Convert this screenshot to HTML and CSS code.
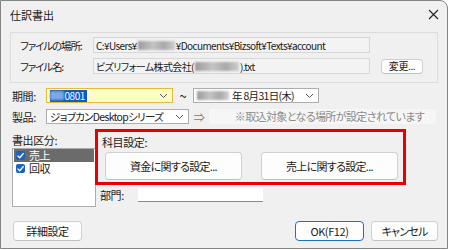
FILE: index.html
```html
<!DOCTYPE html>
<html lang="ja">
<head>
    <meta charset="UTF-8">
    <title>仕訳書出</title>
    <link rel="stylesheet" href="styles.css">
</head>
<body>
    <div class="window">
        <div class="titlebar">
            <span class="title">仕訳書出</span>
            <svg class="close" width="11" height="11" viewBox="0 0 11 11">
                <path d="M1 1 L10 10 M10 1 L1 10" stroke="#222" stroke-width="1.1" fill="none"/>
            </svg>
        </div>

        <div class="content">
            <div class="group">
                <div class="group-row">
                    <span class="label">ファイルの場所:</span>
                    <div class="field">C:¥Users¥<span class="blur path-blur"></span>¥Documents¥Bizsoft¥Texts¥account</div>
                </div>
                <div class="group-row">
                    <span class="label">ファイル名:</span>
                    <div class="field">ビズリフォーム株式会社(<span class="blur name-blur"></span>).txt</div>
                    <button class="btn btn-change">変更...</button>
                </div>
            </div>

            <div class="line line-period">
                <span class="short-label">期間:</span>
                <div class="combo combo-from">
                    <span class="selected"><span class="blur sel-blur"></span>0801</span>
                    <svg class="chevron" width="9" height="6" viewBox="0 0 9 6"><path d="M1 1 L4.5 4.5 L8 1" stroke="#555" fill="none"/></svg>
                </div>
                <span class="tilde">~</span>
                <div class="combo combo-to">
                    <span class="combo-text"><span class="blur date-blur"></span>年 8月31日(木)</span>
                    <svg class="chevron" width="9" height="6" viewBox="0 0 9 6"><path d="M1 1 L4.5 4.5 L8 1" stroke="#555" fill="none"/></svg>
                </div>
            </div>

            <div class="line line-product">
                <span class="short-label">製品:</span>
                <div class="combo combo-product">
                    <span class="combo-text">ジョブカンDesktopシリーズ</span>
                    <svg class="chevron" width="9" height="6" viewBox="0 0 9 6"><path d="M1 1 L4.5 4.5 L8 1" stroke="#555" fill="none"/></svg>
                </div>
                <span class="arrow">⇒</span>
                <div class="note-field">※取込対象となる場所が設定されています</div>
            </div>

            <div class="lower">
                <div class="output-col">
                    <div class="output-label">書出区分:</div>
                    <div class="listbox">
                        <div class="list-item active"><span class="check"><svg width="9" height="9" viewBox="0 0 9 9"><path d="M1.5 4.6 L3.7 6.7 L7.6 2.3" stroke="#fff" stroke-width="1.3" fill="none"/></svg></span>売上</div>
                        <div class="list-item"><span class="check"><svg width="9" height="9" viewBox="0 0 9 9"><path d="M1.5 4.6 L3.7 6.7 L7.6 2.3" stroke="#fff" stroke-width="1.3" fill="none"/></svg></span>回収</div>
                    </div>
                </div>

                <div class="settings-col">
                    <div class="subject-box">
                        <div class="subject-label">科目設定:</div>
                        <div class="subject-buttons">
                            <button class="btn btn-subject">資金に関する設定...</button>
                            <button class="btn btn-subject">売上に関する設定...</button>
                        </div>
                    </div>
                    <div class="dept-row">
                        <span class="dept-label">部門:</span>
                        <div class="dept-field"></div>
                    </div>
                </div>
            </div>

            <div class="footer">
                <button class="btn btn-detail">詳細設定</button>
                <div class="footer-right">
                    <button class="btn btn-ok">OK(F12)</button>
                    <button class="btn btn-cancel">キャンセル</button>
                </div>
            </div>
        </div>
    </div>
</body>
</html>
```

FILE: styles.css
```css
/* General */
* {
    box-sizing: border-box;
}

body {
    margin: 0;
    background-color: #fff;
    font-family: "Noto Sans CJK JP", "Noto Sans", sans-serif;
    font-feature-settings: "palt";
    font-size: 11px;
    letter-spacing: -0.4px;
    color: #1a1a1a;
}

.window {
    width: 448px;
    height: 249px;
    background-color: #f0f0f0;
    border: 1px solid #858585;
    border-top-right-radius: 8px;
    overflow: hidden;
}

/* Title bar */
.titlebar {
    height: 30px;
    display: flex;
    align-items: center;
    justify-content: space-between;
    padding: 0 8px 0 9px;
}

.title {
    margin-top: -3px;
    letter-spacing: 0;
}

.close {
    margin-top: -3px;
}

.content {
    padding: 0 9px 0 9px;
}

/* File group */
.group {
    height: 51px;
    border: 1px solid #dcdcdc;
    margin-top: 1px;
    padding: 4px 5px 0 9px;
    display: flex;
    flex-direction: column;
    gap: 5px;
}

.group-row {
    display: flex;
    align-items: center;
    height: 16px;
}

.label {
    width: 73px;
    flex-shrink: 0;
    white-space: nowrap;
    font-size: 10.5px;
    letter-spacing: -1.1px;
}

.field {
    width: 277px;
    height: 16px;
    border: 1px solid #d6d6d6;
    background-color: #f3f3f3;
    padding-left: 2px;
    white-space: nowrap;
    overflow: hidden;
    display: flex;
    align-items: center;
    font-size: 10px;
    letter-spacing: -0.6px;
}

.blur {
    display: inline-block;
    height: 9px;
    background: linear-gradient(90deg, #9a9a9a, #c4c4c4 40%, #a8a8a8 70%, #cfcfcf);
    filter: blur(0.8px);
}

.path-blur { width: 37px; margin: 0 1px; }
.name-blur { width: 44px; margin: 0 1px; }
.date-blur { width: 32px; margin-right: 3px; }
.sel-blur { width: 16px; background: #7fa9dd; }

/* Buttons */
.btn {
    font-family: inherit;
    font-feature-settings: "palt";
    font-size: 11px;
    letter-spacing: -0.4px;
    color: #1a1a1a;
    background-color: #fdfdfd;
    border: 1px solid #d0d0d0;
    border-bottom-color: #c0c0c0;
    border-radius: 4px;
    padding: 0;
    cursor: pointer;
}

.btn-change {
    width: 42px;
    height: 15px;
    margin-left: 11px;
    font-size: 10px;
    line-height: 12px;
}

/* Period and product rows */
.line {
    display: flex;
    align-items: center;
    padding-left: 2px;
    height: 15px;
}

.line-period {
    margin-top: 5px;
}

.line-product {
    margin-top: 6px;
}

.short-label {
    width: 34px;
    flex-shrink: 0;
}

.combo {
    height: 15px;
    border: 1px solid #adadad;
    background-color: #fff;
    display: flex;
    align-items: center;
    justify-content: space-between;
    padding: 0 4px 0 3px;
}

.combo-from {
    width: 127px;
    background-color: #ffffc4;
    border-color: #e4b93c;
}

.combo-to {
    width: 126px;
}

.combo-product {
    width: 143px;
}

.selected {
    background-color: #0a5cc2;
    color: #fff;
    height: 12px;
    padding-right: 2px;
    display: flex;
    align-items: center;
    width: 37px;
    justify-content: space-between;
    font-size: 10px;
}

.combo-text {
    display: flex;
    align-items: center;
    white-space: nowrap;
    font-size: 10.5px;
    letter-spacing: -0.7px;
}

.tilde {
    width: 20px;
    text-align: center;
    font-size: 13px;
}

.arrow {
    width: 20px;
    text-align: center;
    color: #777;
}

.note-field {
    width: 227px;
    height: 15px;
    line-height: 15px;
    background-color: #f6f6f6;
    border-radius: 2px;
    color: #8a8a8a;
    text-align: center;
    padding-left: 14px;
    white-space: nowrap;
    letter-spacing: -0.6px;
}

/* Lower area */
.lower {
    display: flex;
    margin-top: 5px;
    height: 80px;
}

.output-col {
    width: 86px;
    padding-left: 2px;
    flex-shrink: 0;
}

.output-label {
    margin-top: 4px;
    height: 15px;
    line-height: 15px;
}

.listbox {
    height: 59px;
    border: 1px solid #adadad;
    background-color: #fff;
    padding: 0 1px;
}

.list-item {
    height: 13px;
    line-height: 13px;
    display: flex;
    align-items: center;
}

.list-item.active {
    background-color: #6b6b6b;
    color: #fff;
}

.check {
    width: 9px;
    height: 9px;
    background-color: #1c63c0;
    border-radius: 2px;
    margin: 0 4px 0 2px;
    display: flex;
    align-items: center;
    justify-content: center;
}

.settings-col {
    margin-left: -1px;
}

.subject-box {
    width: 311px;
    height: 56px;
    border: 3px solid #e80000;
    padding: 0 0 0 4px;
}

.subject-label {
    height: 20px;
    line-height: 20px;
}

.subject-buttons {
    display: flex;
    gap: 19px;
    padding-left: 3px;
}

.btn-subject {
    width: 137px;
    height: 28px;
    letter-spacing: -0.7px;
}

.dept-row {
    display: flex;
    align-items: center;
    margin-top: 2px;
    padding-left: 5px;
}

.dept-label {
    width: 38px;
}

.dept-field {
    width: 125px;
    height: 14px;
    background-color: #fff;
    border-bottom: 1px solid #8a8a8a;
}

/* Footer */
.footer {
    display: flex;
    justify-content: space-between;
    align-items: center;
    margin-top: 12px;
    padding-left: 3px;
}

.footer-right {
    display: flex;
    gap: 7px;
}

.btn-detail {
    width: 69px;
    height: 20px;
}

.btn-ok {
    width: 69px;
    height: 20px;
    border: 1px solid #1f6fc4;
}

.btn-cancel {
    width: 67px;
    height: 20px;
    letter-spacing: -0.8px;
}
```
